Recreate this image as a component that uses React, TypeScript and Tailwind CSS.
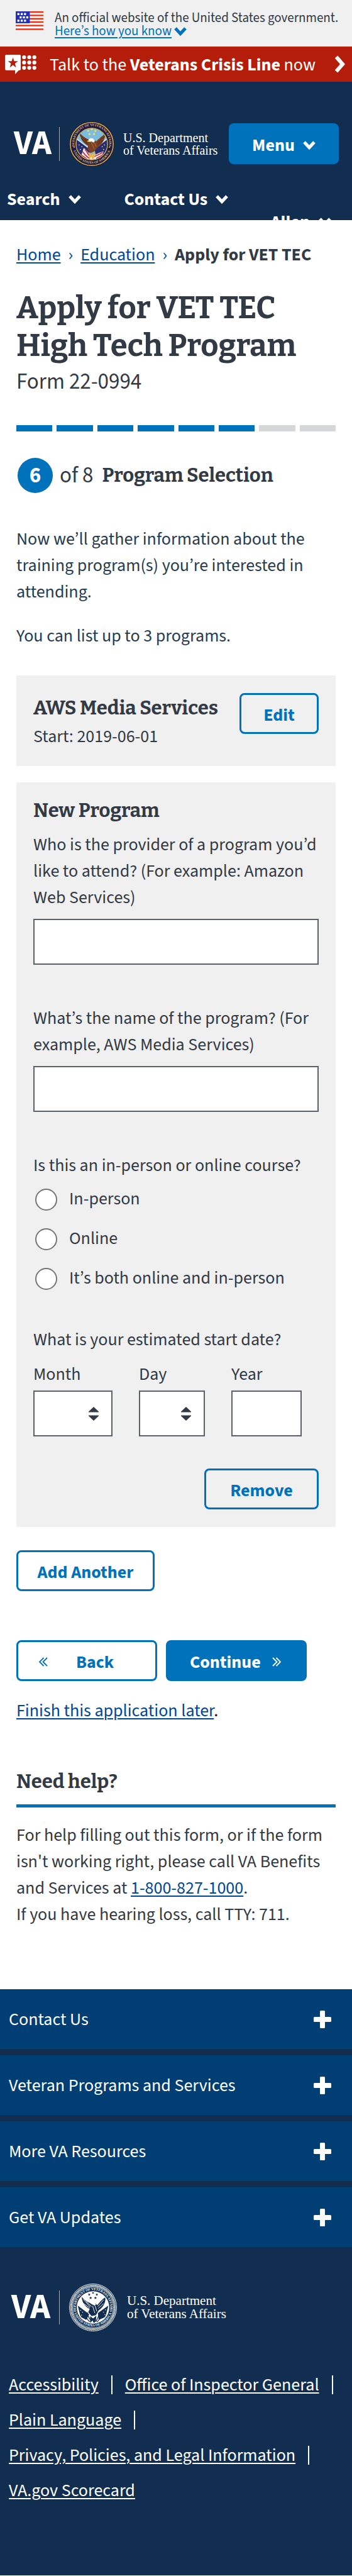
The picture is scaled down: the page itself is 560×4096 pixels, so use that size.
import type { ReactNode } from "react";

function ChevronDown({ className }: { className: string }) {
  return (
    <svg viewBox="0 0 20 16" className={className} fill="none" stroke="currentColor" strokeWidth="5" aria-hidden="true">
      <path d="M2 3 10 11.500 18 3" />
    </svg>
  );
}

function DoubleChevron({ className }: { className: string }) {
  return (
    <svg viewBox="0 0 14 15" className={className} fill="none" stroke="currentColor" strokeWidth="1.800" aria-hidden="true">
      <path d="M1 1 7.500 7.500 1 14M6.500 1 13 7.500 6.500 14" />
    </svg>
  );
}

function Flag() {
  return (
    <svg viewBox="0 0 50 34" className="h-[30px] w-[44px] shrink-0" aria-hidden="true">
      <rect width="50" height="34" fill="#fff" />
      {[0, 6, 12, 18, 24.3, 31].map((y) => (
        <rect key={y} y={y} width="50" height="2.7" fill="#f52a0a" />
      ))}
      <rect width="25.5" height="21.5" fill="#2230b8" />
      {[
        [3, 3], [9, 3], [15, 3],
        [7, 9], [13, 9], [19, 9],
        [3, 15], [9, 15], [15, 15],
      ].map(([x, y]) => (
        <rect key={`${x}-${y}`} x={x} y={y} width="3.7" height="3.7" fill="#fff" />
      ))}
    </svg>
  );
}

function CrisisIcon() {
  return (
    <svg viewBox="0 0 56 35" className="h-[31px] w-[50px] shrink-0" aria-hidden="true">
      <path
        fill="#fff"
        fillRule="evenodd"
        d="M2 0H26a2 2 0 0 1 2 2V26a2 2 0 0 1-2 2H24.5L18 35V28H2a2 2 0 0 1-2-2V2A2 2 0 0 1 2 0ZM14 5l-2.3 6.7H5l5.4 4.2-2 6.9L14 18.7l5.6 4.1-2-6.9L23 11.700H16.300Z"
      />
      {[4.5, 14, 23.500].map((y) => [34, 43.300, 52.500].map((x) => <circle key={`${x}-${y}`} cx={x} cy={y} r="3.5" fill="#fff" />))}
    </svg>
  );
}

const STARS = [[50, 17], [42, 21], [58, 21], [45, 28], [55, 28]];

function ColorSeal() {
  return (
    <svg viewBox="0 0 100 100" className="h-[72px] w-[72px] shrink-0" role="img" aria-label="Department seal">
      <defs>
        <path id="seal-top" d="M13.300 60A38.500 38.500 0 1 1 86.700 60" />
        <path id="seal-bottom" d="M10 66A43 43 0 0 0 90 66" />
        <clipPath id="seal-inner"><circle cx="50" cy="50" r="34" /></clipPath>
      </defs>
      <circle cx="50" cy="50" r="50" fill="#1b1444" />
      <circle cx="50" cy="50" r="47.500" fill="#1d1a4a" stroke="#dcae3a" strokeWidth="2.200" />
      <g fill="#e0bd68" fontFamily="Liberation Serif, serif" fontWeight="700" fontSize="7.200" textAnchor="middle">
        <text><textPath href="#seal-top" startOffset="50%">DEPARTMENT OF VETERANS AFFAIRS</textPath></text>
        <text><textPath href="#seal-bottom" startOffset="50%">UNITED STATES OF AMERICA</textPath></text>
      </g>
      <circle cx="50" cy="50" r="35" fill="#7cbcdc" stroke="#dcae3a" strokeWidth="1.600" />
      <g clipPath="url(#seal-inner)">
        <path d="M16 40 48 62 40 82 28 80 16 62Z" fill="#2a2f6b" />
        <path d="M84 40 56 60 60 82 74 80 85 62Z" fill="#2a2f6b" />
        <path d="M16 38 50 64M84 38 52 64" stroke="#d9e8f2" strokeWidth="2.400" />
        {[[22, 52], [28, 56], [25, 62], [31, 66], [78, 52], [73, 56], [76, 62]].map(([x, y]) => (
          <circle key={`${x}-${y}`} cx={x} cy={y} r="1.100" fill="#fff" />
        ))}
        <path d="M32 59C40 62 42 72 50 74S62 70 76 66L72 78 50 86 26 78Z" fill="#f2eef0" />
        <path d="M35 62C40 66 41 76 49 78M29 66C34 72 37 78 46 82M26 74 38 82M74 68C66 76 58 74 52 80M78 72 60 82" fill="none" stroke="#c42a3a" strokeWidth="2.500" />
        <path d="M22 24C25 38 30 48 42 54L40 60 47 70 56 66 64 56C74 50 80 38 80 27 70 34 64 40 60 44L54 40 48 41C40 40 30 34 22 24Z" fill="#7a4124" />
        <path d="M25 31 41 47M27 38 42 51M77 34 62 48M75 42 62 52M34 37 46 48" stroke="#4d2614" strokeWidth="1.300" />
        <path d="M48 44 56 62M54 44 60 56" stroke="#a8683b" strokeWidth="1.600" />
        <path d="M43 40C47 35 54 37 57 43L54 47 49 44 44 46Z" fill="#fff" />
        <path d="M43 41 39 44 43 46Z" fill="#f0c030" />
        <path d="M44 68 50 74 57 67 56 78 52 86 49 78 44 84Z" fill="#eab646" />
        {STARS.map(([x, y]) => <circle key={`${x}-${y}`} cx={x} cy={y} r="2.200" fill="#f3dc6e" />)}
      </g>
      <circle cx="11" cy="57" r="1.400" fill="#e0bd68" />
      <circle cx="89" cy="57" r="1.400" fill="#e0bd68" />
    </svg>
  );
}

function WhiteSeal() {
  return (
    <svg viewBox="0 0 100 100" className="h-[76px] w-[76px] shrink-0" role="img" aria-label="Department seal">
      <circle cx="50" cy="50" r="49.300" fill="none" stroke="#fff" strokeWidth="1.200" />
      <circle cx="50" cy="50" r="45.600" fill="none" stroke="#fff" strokeWidth="4.200" strokeDasharray="1.700 1" />
      <circle cx="50" cy="50" r="42.600" fill="none" stroke="#fff" strokeWidth="0.900" />
      <g fill="#fff" fontFamily="Liberation Serif, serif" fontWeight="700" fontSize="7" textAnchor="middle">
        <text><textPath href="#mono-top" startOffset="50%">DEPARTMENT OF VETERANS AFFAIRS</textPath></text>
        <text><textPath href="#mono-bottom" startOffset="50%">UNITED STATES OF AMERICA</textPath></text>
      </g>
      <defs>
        <path id="mono-top" d="M15.200 60A36.200 36.200 0 1 1 84.800 60" />
        <path id="mono-bottom" d="M12 64A41 41 0 0 0 88 64" />
        <clipPath id="mono-inner"><circle cx="50" cy="50" r="32" /></clipPath>
      </defs>
      <circle cx="50" cy="50" r="34" fill="#fff" />
      <g clipPath="url(#mono-inner)">
        <g fill="#112e51">
          {STARS.map(([x, y]) => (
            <path key={`${x}-${y}`} transform={`translate(${x} ${y + 2})`} d="M0-3 .9-.9 3-.9 1.300.5 2 2.800 0 1.400-2 2.800-1.300.5-3-.9-.9-.9Z" />
          ))}
          <path d="M26 27C27 38 32 48 43 53L40 60 47 68 56 66 62 56C71 50 77 40 76 28 68 34 63 40 59 45L54 41 48 42C41 40 32 36 26 27Z" />
          <path d="M18 46 42 64 36 76 24 70ZM82 46 60 62 62 76 76 70Z" />
          <path d="M44 68 50 73 57 67 56 78 52 84 49 77 44 83Z" />
        </g>
        <path d="M30 33 44 49M29 41 43 51M72 34 60 48M72 42 61 52M36 38 47 48M49 47 54 62M54 46 58 58" stroke="#fff" strokeWidth="1.200" />
        <path d="M38 60C40 68 40 72 46 77M33 62C34 70 37 74 43 80M62 62C63 70 58 74 56 80M68 62C68 70 63 76 58 81" fill="none" stroke="#112e51" strokeWidth="1.600" />
        {[[24, 56], [28, 60], [26, 66], [76, 55], [72, 60], [75, 65]].map(([x, y]) => (
          <circle key={`${x}-${y}`} cx={x} cy={y} r="1" fill="#fff" />
        ))}
        <path d="M44 41C48 37 54 39 56 44L53 46 49 44Z" fill="#fff" />
      </g>
    </svg>
  );
}

function Lockup({ seal, markClass, nameClass }: { seal: ReactNode; markClass: string; nameClass: string }) {
  return (
    <div className="flex items-center text-white">
      <span className={`leading-[54px] font-bold ${markClass}`}>VA</span>
      <span className="mr-[15px] h-[54px] w-px bg-white/60" />
      {seal}
      <span className={`whitespace-nowrap font-['Liberation_Serif',serif] ${nameClass}`}>
        U.S. Department
        <br />
        of Veterans Affairs
      </span>
    </div>
  );
}

function OutlineButton({ className, children }: { className: string; children: ReactNode }) {
  return (
    <button
      type="button"
      className={`flex h-[65px] items-center rounded-[8px] border-[3px] border-[#0071bb] pt-[4px] font-bold text-[#0071bb] ${className}`}
    >
      {children}
    </button>
  );
}

function DateSelect({ id, label, className }: { id: string; label: string; className: string }) {
  return (
    <div className={className}>
      <label htmlFor={id} className="block">{label}</label>
      <div className="relative mt-[5px]">
        <select id={id} className="block h-[73px] w-full appearance-none rounded-none border-2 border-[#5b616b] bg-white px-3">
          <option value="" />
        </select>
        <svg viewBox="0 0 16 22" className="pointer-events-none absolute top-[26px] right-[22px] h-[22px] w-[16px] fill-[#323a45]" aria-hidden="true">
          <path d="M0 8.500V7.600L8 0l8 7.600v.9ZM0 13.500v.9L8 22l8-7.600v-.9Z" />
        </svg>
      </div>
    </div>
  );
}

const LINK = "text-[#004795] underline decoration-2 underline-offset-[3px]";
const INPUT = "block h-[73px] w-full rounded-none border-2 border-[#5b616b] bg-white px-3";
const HEADING = "font-['Bitter','DejaVu_Serif_Condensed',serif] font-bold";

const SECTIONS = ["Contact Us", "Veteran Programs and Services", "More VA Resources", "Get VA Updates"];
const LEGAL = ["Accessibility", "Office of Inspector General", "Plain Language", "Privacy, Policies, and Legal Information", "VA.gov Scorecard"];
const COURSE = ["In-person", "Online", "It’s both online and in-person"];

export default function App() {
  return (
    <div className="bg-white font-['Source_Sans_3','Noto_Sans_CJK_KR',sans-serif] text-[28px] leading-[42px] text-[#323a45]">
      <div className="flex h-[74px] items-start bg-[#f0f0f0] pt-[18px] pl-[25px]">
        <Flag />
        <div className="ml-[18px] text-[21px] leading-[21px]">
          <p className="whitespace-nowrap">An official website of the United States government.</p>
          <button type="button" className="flex items-center text-[#0071bb]">
            <span className="underline decoration-2 underline-offset-[3px]">Here’s how you know</span>
            <ChevronDown className="ml-[4px] h-[16px] w-[20px]" />
          </button>
        </div>
      </div>

      <a href="#crisis" className="flex h-[56px] items-center bg-[#b31d09] pr-[10px] pl-[8px] text-white">
        <CrisisIcon />
        <span className="ml-[21px] flex-1 pt-[2px] whitespace-nowrap">
          Talk to the <b>Veterans Crisis Line</b> now
        </span>
        <svg viewBox="0 0 18 28" className="h-[28px] w-[18px]" fill="none" stroke="currentColor" strokeWidth="6" aria-hidden="true">
          <path d="M3 2.500 13 14 3 25.500" />
        </svg>
      </a>

      <header className="h-[220px] overflow-hidden bg-[#112e51] pt-[66px] text-white">
        <div className="flex h-[65px] items-center justify-between pr-[21px] pl-[22px]">
          <Lockup seal={<ColorSeal />} markClass="w-[72px] text-[54px]" nameClass="ml-[14px] text-[20px] leading-[20px]" />
          <button type="button" className="flex h-[65px] w-[175px] items-center justify-center gap-[13px] rounded-[8px] bg-[#0071bb] pt-[4px] font-bold">
            Menu
            <ChevronDown className="h-[16px] w-[20px]" />
          </button>
        </div>
        <nav className="mt-[38px] flex flex-wrap gap-x-[68px] pr-[33px] pl-[11px] leading-[36px] font-bold">
          <button type="button" className="flex items-center gap-[14px]">
            Search
            <ChevronDown className="h-[16px] w-[20px]" />
          </button>
          <button type="button" className="flex items-center gap-[13px]">
            Contact Us
            <ChevronDown className="h-[16px] w-[20px]" />
          </button>
          <button type="button" className="ml-auto flex items-center gap-[14px] pl-[60px]">
            Allen
            <ChevronDown className="h-[16px] w-[20px]" />
          </button>
        </nav>
      </header>

      <main className="px-[26px] pt-[34px]">
        <nav aria-label="Breadcrumb" className="flex gap-[12px] whitespace-nowrap">
          <a href="#home" className={LINK}>Home</a>
          <span className="text-[#004795]">›</span>
          <a href="#education" className={LINK}>Education</a>
          <span className="text-[#004795]">›</span>
          <span className="font-bold">Apply for VET TEC</span>
        </nav>

        <h1 className={`${HEADING} mt-[34px] text-[49px] leading-[60px]`}>
          Apply for VET TEC
          <br />
          High Tech Program
        </h1>
        <p className="mt-[6px] text-[35px]">Form 22-0994</p>

        <div className="mt-[48px] grid grid-cols-8 gap-[7px]">
          {[1, 2, 3, 4, 5, 6].map((n) => <span key={n} className="h-[10px] bg-[#0071bb]" />)}
          {[7, 8].map((n) => <span key={n} className="h-[10px] bg-[#d6d7d9]" />)}
        </div>

        <div className="mt-[42px] flex items-center text-[35px]">
          <span className="mr-[11px] ml-[2px] flex h-[56px] w-[56px] items-center justify-center rounded-full bg-[#0071bb] font-bold text-white">6</span>
          of 8
          <h2 className={`${HEADING} ml-[14px] text-[31px]`}>Program Selection</h2>
        </div>

        <p className="mt-[52px] text-[#263c4f]">Now we’ll gather information about the training program(s) you’re interested in attending.</p>
        <p className="mt-[28px] text-[#263c4f]">You can list up to 3 programs.</p>

        <section className="mt-[42px] flex h-[144px] items-start justify-between bg-[#f0f0f0] px-[27px] pt-[28px]">
          <div className="pt-[3px]">
            <h3 className={`${HEADING} mb-[3px] text-[31px]`}>AWS Media Services</h3>
            <p>Start: 2019-06-01</p>
          </div>
          <OutlineButton className="w-[126px] justify-center">Edit</OutlineButton>
        </section>

        <section className="mt-[26px] bg-[#f0f0f0] px-[27px] pt-[24px] pb-[28px]">
          <h3 className={`${HEADING} text-[31px]`}>New Program</h3>
          <label htmlFor="provider" className="mt-[12px] -mr-[10px] block">
            Who is the provider of a program you’d like to attend? (For example: Amazon Web Services)
          </label>
          <input id="provider" type="text" className={`${INPUT} mt-[13px]`} />
          <label htmlFor="program" className="mt-[64px] block">
            What’s the name of the program? (For example, AWS Media Services)
          </label>
          <input id="program" type="text" className={`${INPUT} mt-[13px]`} />

          <fieldset className="mt-[64px]">
            <legend>Is this an in-person or online course?</legend>
            <div className="mt-[11px] flex flex-col gap-[21px]">
              {COURSE.map((name) => (
                <label key={name} className="flex items-start gap-[19px] pl-[3px]">
                  <input
                    type="radio"
                    name="course"
                    className="mt-[5px] h-[35px] w-[35px] appearance-none rounded-full border-2 border-[#757575] bg-white checked:bg-[#0071bb]"
                  />
                  {name}
                </label>
              ))}
            </div>
          </fieldset>

          <fieldset className="mt-[56px]">
            <legend>What is your estimated start date?</legend>
            <div className="mt-[13px] flex gap-[42px]">
              <DateSelect id="month" label="Month" className="w-[126px]" />
              <DateSelect id="day" label="Day" className="w-[105px]" />
              <div className="w-[112px]">
                <label htmlFor="year" className="block">Year</label>
                <input id="year" type="text" className={`${INPUT} mt-[5px]`} />
              </div>
            </div>
          </fieldset>

          <OutlineButton className="mt-[51px] ml-auto w-[182px] justify-center">Remove</OutlineButton>
        </section>

        <OutlineButton className="mt-[37px] w-[220px] justify-center">Add Another</OutlineButton>

        <div className="mt-[78px] flex gap-[14px]">
          <OutlineButton className="w-[224px] pl-[33px]">
            <DoubleChevron className="h-[15px] w-[14px] rotate-180" />
            <span className="ml-[45px]">Back</span>
          </OutlineButton>
          <button type="button" className="flex h-[65px] w-[224px] items-center rounded-[8px] bg-[#0071bb] pt-[4px] pl-[38px] font-bold text-white">
            Continue
            <DoubleChevron className="ml-[18px] h-[15px] w-[14px]" />
          </button>
        </div>
        <p className="mt-[26px] text-black">
          <a href="#later" className={LINK}>Finish this application later</a>.
        </p>

        <h2 className={`${HEADING} mt-[71px] border-b-[5px] border-[#0071bb] pb-[15px] text-[31px]`}>Need help?</h2>
        <p className="mt-[23px] pb-[98px]">
          For help filling out this form, or if the form isn't working right, please call VA Benefits and Services at{" "}
          <a href="tel:18008271000" className={LINK}>1-800-827-1000</a>.
          <br />
          If you have hearing loss, call TTY: 711.
        </p>
      </main>

      <footer className="bg-[#112e51] pb-[107px] text-white">
        <div className="flex flex-col gap-[10px]">
          {SECTIONS.map((name) => (
            <button key={name} type="button" className="flex h-[95px] items-center justify-between bg-[#003e73] pr-[33px] pl-[14px]">
              {name}
              <svg viewBox="0 0 28 28" className="h-[28px] w-[28px] fill-white" aria-hidden="true">
                <rect x="10" width="8" height="28" rx="1.500" />
                <rect y="10" width="28" height="8" rx="1.500" />
              </svg>
            </button>
          ))}
        </div>
        <div className="mt-[58px] pl-[18px]">
          <Lockup seal={<WhiteSeal />} markClass="w-[76px] text-[56px]" nameClass="ml-[16px] text-[21px] leading-[21px]" />
        </div>
        <ul className="mt-[57px] flex flex-wrap pl-[14px] leading-[56px]">
          {LEGAL.map((name, i) => (
            <li key={name} className="flex items-center whitespace-nowrap">
              <a href="#legal" className="underline decoration-2 underline-offset-[3px]">{name}</a>
              {i < LEGAL.length - 1 && <span className="mx-[20px] h-[30px] w-[2px] bg-white" />}
            </li>
          ))}
        </ul>
      </footer>
    </div>
  );
}
